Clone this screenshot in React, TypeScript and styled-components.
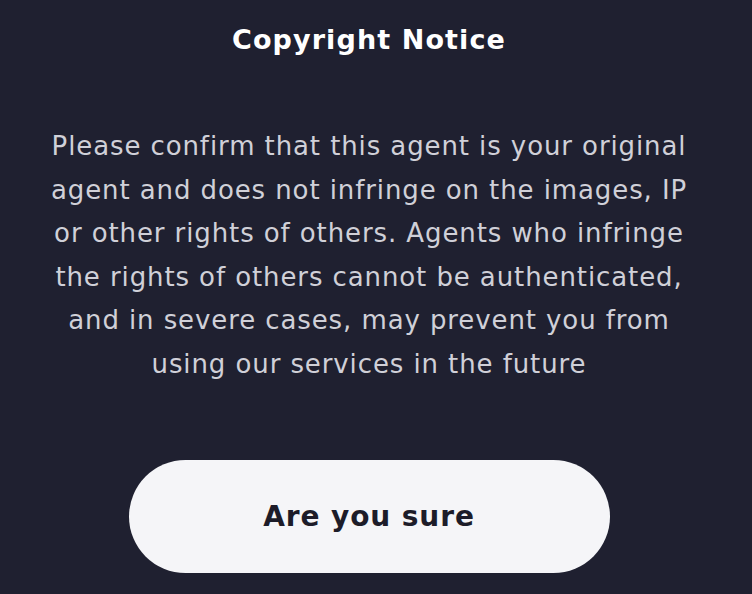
import React from "react";
import styled, {createGlobalStyle} from "styled-components";

const GlobalStyle = createGlobalStyle`
body {
margin: 0;
background: #1f2030;
}
`

export const Page = styled.div`
width: 752px;
height: 594px;
box-sizing: border-box;
background: #1f2030;
display: flex;
flex-direction: column;
align-items: center;
padding: 23px 14px 0 0;
font-family: "DejaVu Sans", "Open Sans", sans-serif;
`

export const Title = styled.h1`
margin: 0;
color: #ffffff;
font-size: 27px;
font-weight: 700;
line-height: 34px;
letter-spacing: 1.1px;
`

export const Message = styled.p`
margin: 68px 0 0 0;
color: #d0d0d8;
font-size: 26px;
line-height: 43.6px;
text-align: center;
letter-spacing: 0.9px;
`

export const ConfirmButton = styled.button`
margin-top: 73px;
width: 481px;
height: 113px;
border: none;
border-radius: 57px;
background: #f5f5f8;
color: #1d1c29;
font-family: inherit;
font-size: 28px;
font-weight: 700;
letter-spacing: 0.9px;
cursor: pointer;
`

const lines = [
    "Please confirm that this agent is your original",
    "agent and does not infringe on the images, IP",
    "or other rights of others. Agents who infringe",
    "the rights of others cannot be authenticated,",
    "and in severe cases, may prevent you from",
    "using our services in the future",
]

export default function App() {
    return <>
        <GlobalStyle/>
        <Page>
            <Title>Copyright Notice</Title>
            <Message>
                {lines.map((l, i) => <React.Fragment key={i}>{l}{i < lines.length - 1 && <br/>}</React.Fragment>)}
            </Message>
            <ConfirmButton>Are you sure</ConfirmButton>
        </Page>
    </>
}
